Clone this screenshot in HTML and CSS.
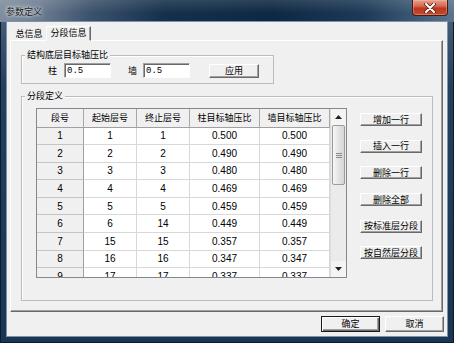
FILE: index.html
```html
<!DOCTYPE html>
<html lang="zh">
<head>
    <meta charset="UTF-8">
    <title>参数定义</title>
    <link rel="stylesheet" href="styles.css">
</head>
<body>
    <div class="window">
        <!-- Title bar -->
        <div class="titlebar">
            <span class="title">参数定义</span>
            <div class="close">
                <svg width="12" height="10" viewBox="0 0 12 10">
                    <path d="M2 1 L10 9 M10 1 L2 9" stroke="#5a1f14" stroke-width="3.6" stroke-linecap="round"/>
                    <path d="M2 1 L10 9 M10 1 L2 9" stroke="#fff" stroke-width="2" stroke-linecap="round"/>
                </svg>
            </div>
        </div>

        <div class="client">
            <!-- Tabs -->
            <div class="tabs">
                <div class="tab">总信息</div>
                <div class="tab active">分段信息</div>
            </div>

            <div class="panel">
                <fieldset class="group base">
                    <legend>结构底层目标轴压比</legend>
                    <div class="base-row">
                        <span class="lbl">柱</span>
                        <input class="edit" type="text" value="0.5">
                        <span class="lbl wall">墙</span>
                        <input class="edit" type="text" value="0.5">
                        <button class="btn apply">应用</button>
                    </div>
                </fieldset>

                <fieldset class="group seg">
                    <legend>分段定义</legend>
                    <div class="seg-body">
                        <div class="grid-wrap">
                            <div class="grid">
                                <table>
                                    <colgroup>
                                        <col style="width:47px">
                                        <col style="width:53px">
                                        <col style="width:53px">
                                        <col style="width:70px">
                                        <col style="width:70px">
                                    </colgroup>
                                    <tr class="head">
                                        <th>段号</th><th>起始层号</th><th>终止层号</th><th>柱目标轴压比</th><th>墙目标轴压比</th>
                                    </tr>
                                    <tr><td class="rh">1</td><td>1</td><td>1</td><td>0.500</td><td>0.500</td></tr>
                                    <tr><td class="rh">2</td><td>2</td><td>2</td><td>0.490</td><td>0.490</td></tr>
                                    <tr><td class="rh">3</td><td>3</td><td>3</td><td>0.480</td><td>0.480</td></tr>
                                    <tr><td class="rh">4</td><td>4</td><td>4</td><td>0.469</td><td>0.469</td></tr>
                                    <tr><td class="rh">5</td><td>5</td><td>5</td><td>0.459</td><td>0.459</td></tr>
                                    <tr><td class="rh">6</td><td>6</td><td>14</td><td>0.449</td><td>0.449</td></tr>
                                    <tr><td class="rh">7</td><td>15</td><td>15</td><td>0.357</td><td>0.357</td></tr>
                                    <tr><td class="rh">8</td><td>16</td><td>16</td><td>0.347</td><td>0.347</td></tr>
                                    <tr><td class="rh">9</td><td>17</td><td>17</td><td>0.337</td><td>0.337</td></tr>
                                </table>
                            </div>
                            <div class="vscroll">
                                <div class="sb-btn">
                                    <svg width="7" height="4" viewBox="0 0 7 4"><path d="M0 4 L3.5 0 L7 4 Z" fill="#222"/></svg>
                                </div>
                                <div class="sb-thumb"><span class="grip"></span></div>
                                <div class="sb-track"></div>
                                <div class="sb-btn">
                                    <svg width="7" height="4" viewBox="0 0 7 4"><path d="M0 0 L7 0 L3.5 4 Z" fill="#222"/></svg>
                                </div>
                            </div>
                        </div>

                        <div class="side">
                            <button class="btn side-btn">增加一行</button>
                            <button class="btn side-btn">插入一行</button>
                            <button class="btn side-btn">删除一行</button>
                            <button class="btn side-btn">删除全部</button>
                            <button class="btn side-btn">按标准层分段</button>
                            <button class="btn side-btn">按自然层分段</button>
                        </div>
                    </div>
                </fieldset>
            </div>

            <!-- Footer -->
            <div class="footer">
                <button class="btn dlg default">确定</button>
                <button class="btn dlg">取消</button>
            </div>
        </div>
    </div>
</body>
</html>
```

FILE: styles.css
```css
/* Reset */
* {
    margin: 0;
    padding: 0;
    box-sizing: border-box;
}

body {
    width: 454px;
    height: 343px;
    overflow: hidden;
    font-family: "Noto Sans CJK SC", sans-serif;
    font-size: 9px;
    color: #000;
    background: #1d3654;
}

/* Window frame */
.window {
    width: 454px;
    height: 343px;
    display: flex;
    flex-direction: column;
    background: linear-gradient(180deg, #4d6680 0%, #243f5d 25%, #1a3453 100%);
    box-shadow: inset 0 0 0 1px #0b1b2c;
}

.titlebar {
    height: 22px;
    display: flex;
    align-items: flex-start;
    justify-content: space-between;
    background:
        linear-gradient(180deg, rgba(255, 255, 255, 0.12) 0%, rgba(255, 255, 255, 0) 60%),
        linear-gradient(90deg, #7e8e9f 0%, #6a7b8f 9%, #3b526c 20%, #16304c 36%, #0e2843 60%, #1d3957 80%, #3f5a76 92%, #5b7590 100%);
}

.title {
    padding: 6px 0 0 6px;
    font-size: 9px;
    line-height: 12px;
    color: #1c1c1c;
    text-shadow: 0 0 3px #fff, 0 0 6px rgba(255, 255, 255, 0.8);
}

.close {
    width: 36px;
    height: 16px;
    margin-right: 6px;
    display: flex;
    align-items: center;
    justify-content: center;
    border: 1px solid #4a1a10;
    border-top: none;
    border-radius: 0 0 4px 4px;
    background: linear-gradient(180deg, #e7a08e 0%, #d66a55 40%, #bb3720 55%, #c44a30 100%);
    box-shadow: inset 0 0 0 1px rgba(255, 200, 180, 0.35);
}

.client {
    height: 314px;
    margin: 0 7px;
    background: #f0f0f0;
    outline: 1px solid #7d93aa;
    display: flex;
    flex-direction: column;
}

/* Tabs */
.tabs {
    height: 18px;
    display: flex;
    align-items: flex-end;
    padding-left: 5px;
}

.tab {
    height: 12px;
    width: 34px;
    line-height: 11px;
    text-align: center;
}

.tab.active {
    width: 45px;
    height: 15px;
    line-height: 12px;
    margin-bottom: -1px;
    background: #f0f0f0;
    border: 1px solid;
    border-color: #fff #696969 transparent #fff;
    box-shadow: inset -1px 0 0 #a0a0a0;
    position: relative;
    z-index: 1;
}

.panel {
    height: 272px;
    margin: 0 4px 0 3px;
    padding: 8px 0 0 10px;
    border: 1px solid;
    border-color: #fff #696969 #696969 #fff;
    box-shadow: inset -1px -1px 0 #a0a0a0;
}

/* Group boxes */
.group {
    margin: 0;
    padding: 0;
    border: 1px solid #bcbcbc;
    box-shadow: inset 1px 1px 0 #fff;
}

.group legend {
    margin-left: 3px;
    padding: 0 2px;
    font-size: 9px;
    line-height: 12px;
    background: #f0f0f0;
}

.base {
    width: 253px;
}

.base-row {
    display: flex;
    align-items: center;
    height: 15px;
    margin: 2px 0 5px;
    padding-left: 26px;
}

.lbl {
    width: 9px;
    margin-right: 7px;
}

.lbl.wall {
    margin-left: 17px;
    margin-right: 6px;
}

.edit {
    width: 47px;
    height: 15px;
    padding: 0 2px;
    font-family: "Liberation Mono", monospace;
    font-size: 9px;
    background: #fff;
    border: 1px solid;
    border-color: #a0a0a0 #fff #fff #a0a0a0;
    box-shadow: inset 1px 1px 0 #696969;
    outline: none;
}

.btn {
    font-family: "Noto Sans CJK SC", sans-serif;
    font-size: 9px;
    line-height: 10px;
    color: #000;
    background: #f0f0f0;
    border: 1px solid;
    border-color: #fff #696969 #696969 #fff;
    box-shadow: inset -1px -1px 0 #a0a0a0;
}

.apply {
    width: 50px;
    height: 14px;
    margin-left: 19px;
}

.seg {
    width: 412px;
    margin-top: 6px;
}

.seg-body {
    height: 198px;
    display: flex;
    align-items: flex-start;
    padding: 6px 0 0 14px;
}

/* Grid */
.grid-wrap {
    width: 311px;
    height: 170px;
    display: flex;
    border: 1px solid #828790;
}

.grid {
    width: 293px;
    overflow: hidden;
    background: #fff;
}

.grid table {
    width: 293px;
    table-layout: fixed;
    border-collapse: separate;
    border-spacing: 0;
}

.grid th {
    height: 18.5px;
    font-weight: normal;
    font-size: 9px;
    background: #f0f0f0;
    border-right: 1px solid #a8a8a8;
    border-bottom: 1px solid #a0a0a0;
}

.grid td {
    height: 17.6px;
    text-align: center;
    font-family: "Liberation Sans", sans-serif;
    font-size: 10px;
    border-right: 1px solid #d8d8d8;
    border-bottom: 1px solid #d8d8d8;
}

.grid td.rh {
    background: #f0f0f0;
    border-right: 1px solid #a0a0a0;
    border-bottom: 1px solid #c4c4c4;
}

/* Scrollbar */
.vscroll {
    width: 16px;
    display: flex;
    flex-direction: column;
    background: #ebebeb;
    border-left: 1px solid #dcdcdc;
}

.sb-btn {
    height: 16px;
    display: flex;
    align-items: center;
    justify-content: center;
    background: #f4f4f4;
}

.sb-thumb {
    height: 60px;
    margin: 0 1px;
    display: flex;
    align-items: center;
    justify-content: center;
    border: 1px solid #9c9c9c;
    border-radius: 2px;
    background: linear-gradient(90deg, #f6f6f6 0%, #e4e4e4 50%, #d6d6d6 100%);
}

.grip {
    width: 6px;
    height: 5px;
    border-top: 1px solid #8a8a8a;
    border-bottom: 1px solid #8a8a8a;
    background: linear-gradient(180deg, transparent 1px, #8a8a8a 1px, #8a8a8a 2px, transparent 2px);
}

.sb-track {
    flex: 1;
}

/* Side buttons */
.side {
    display: flex;
    flex-direction: column;
    gap: 13.7px;
    padding-top: 5px;
    margin-left: 13px;
}

.side-btn {
    width: 62px;
    height: 13px;
}

/* Footer */
.footer {
    display: flex;
    justify-content: flex-end;
    gap: 5px;
    padding: 4px 3px 0 0;
}

.dlg {
    width: 59px;
    height: 16px;
}

.dlg.default {
    border-color: #1a1a1a;
    box-shadow: inset 1px 1px 0 #fff, inset -1px -1px 0 #696969, inset -2px -2px 0 #a0a0a0;
}
```
